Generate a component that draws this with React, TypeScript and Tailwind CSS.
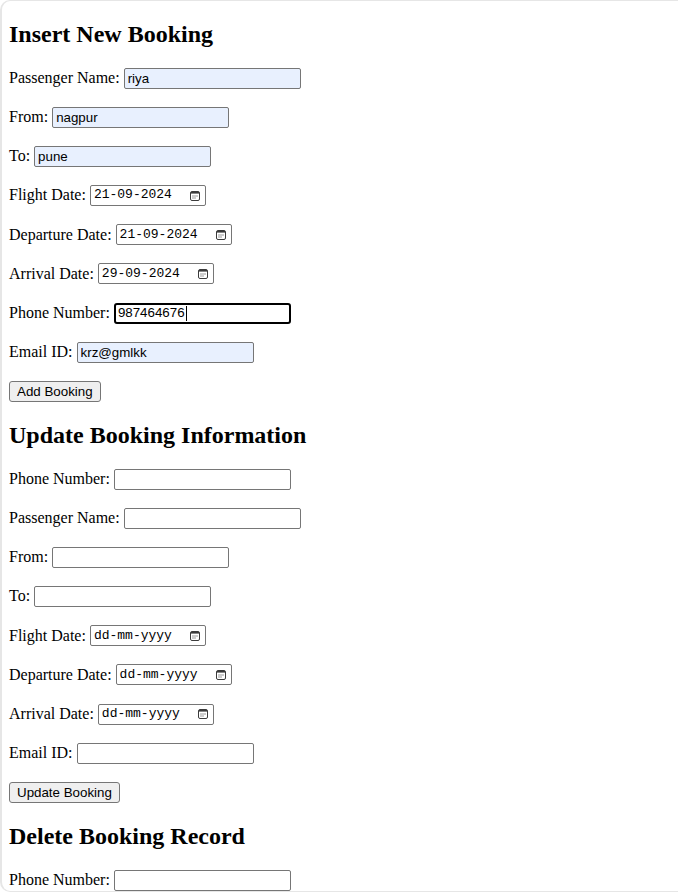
import React from 'react';

type FieldProps = {
    label: string;
    value?: string;
    width: string;
    autofill?: boolean;
    focused?: boolean;
};

const CalendarIcon = () => (
    <svg aria-hidden="true" className="h-3 w-3 shrink-0 text-[#3b3b3b]" viewBox="0 0 12 12">
        <rect x="1.5" y="1.5" width="9" height="9" rx="1.5" fill="none" stroke="currentColor" strokeWidth="1" />
        <rect x="2" y="2" width="8" height="1.6" fill="currentColor" />
        <rect x="3.5" y="5.5" width="1" height="1" fill="currentColor" />
        <rect x="5.5" y="5.5" width="1" height="1" fill="currentColor" />
        <rect x="7.5" y="5.5" width="1" height="1" fill="currentColor" />
        <rect x="3.5" y="7.5" width="1" height="1" fill="currentColor" />
        <rect x="5.5" y="7.5" width="1" height="1" fill="currentColor" />
    </svg>
);

const Row = ({ label, children }: { label: string; children: React.ReactNode }) => (
    <div className="my-4 flex h-[23.15px] items-center">
        <span className="mr-1">{label}</span>
        {children}
    </div>
);

const TextField = ({ label, value = '', width, autofill, focused }: FieldProps) => {
    if (focused) {
        return (
            <Row label={label}>
                <div
                    className={`flex h-[21px] ${width} items-center rounded-[3px] border-2 border-black pl-[2px] font-['Liberation_Sans',sans-serif] text-[13.33px] text-black`}
                >
                    <span>{value}</span>
                    <span className="ml-px h-[15px] w-px bg-black" />
                </div>
            </Row>
        );
    }

    return (
        <Row label={label}>
            <input
                readOnly
                type="text"
                value={value}
                className={`h-[21px] ${width} rounded-[2px] border border-[#767676] px-[3px] font-['Liberation_Sans',sans-serif] text-[13.33px] text-black outline-none ${
                    autofill ? 'bg-[#e8f0fe]' : 'bg-white'
                }`}
            />
        </Row>
    );
};

const DateField = ({ label, value, width }: FieldProps) => (
    <Row label={label}>
        <div
            className={`flex h-[21px] ${width} items-center justify-between rounded-[2px] border border-[#767676] pr-[4px] pl-[3px] font-['Liberation_Mono',monospace] text-[13px] text-black`}
        >
            <span>{value ?? 'dd-mm-yyyy'}</span>
            <CalendarIcon />
        </div>
    </Row>
);

const Button = ({ children }: { children: React.ReactNode }) => (
    <div className="my-4 flex h-[23.15px] items-center">
        <button
            type="button"
            className="h-[21px] rounded-[3px] border border-[#767676] bg-[#efefef] px-[7px] font-['Liberation_Sans',sans-serif] text-[13.33px] leading-none text-black"
        >
            {children}
        </button>
    </div>
);

const Heading = ({ children, first }: { children: React.ReactNode; first?: boolean }) => (
    <h2 className={`${first ? 'mt-[20px]' : 'mt-[19.2px]'} mb-[18px] text-[24px] leading-[27.6px] font-bold`}>
        {children}
    </h2>
);

export default function App() {
    return (
        <div className="h-[892px] overflow-hidden rounded-l-[10px] border-t border-b border-l-2 border-[#e6e6e6] bg-white pl-[7px] font-['Liberation_Serif',serif] text-[16px] leading-[18.4px] text-black">
            <Heading first>Insert New Booking</Heading>
            <TextField label="Passenger Name:" value="riya" width="w-[177px]" autofill />
            <TextField label="From:" value="nagpur" width="w-[177px]" autofill />
            <TextField label="To:" value="pune" width="w-[177px]" autofill />
            <DateField label="Flight Date:" value="21-09-2024" width="w-[116px]" />
            <DateField label="Departure Date:" value="21-09-2024" width="w-[116px]" />
            <DateField label="Arrival Date:" value="29-09-2024" width="w-[116px]" />
            <TextField label="Phone Number:" value="987464676" width="w-[177px]" focused />
            <TextField label="Email ID:" value="krz@gmlkk" width="w-[177px]" autofill />
            <Button>Add Booking</Button>

            <Heading>Update Booking Information</Heading>
            <TextField label="Phone Number:" width="w-[177px]" />
            <TextField label="Passenger Name:" width="w-[177px]" />
            <TextField label="From:" width="w-[177px]" />
            <TextField label="To:" width="w-[177px]" />
            <DateField label="Flight Date:" width="w-[116px]" />
            <DateField label="Departure Date:" width="w-[116px]" />
            <DateField label="Arrival Date:" width="w-[116px]" />
            <TextField label="Email ID:" width="w-[177px]" />
            <Button>Update Booking</Button>

            <Heading>Delete Booking Record</Heading>
            <TextField label="Phone Number:" width="w-[177px]" />
        </div>
    );
}
